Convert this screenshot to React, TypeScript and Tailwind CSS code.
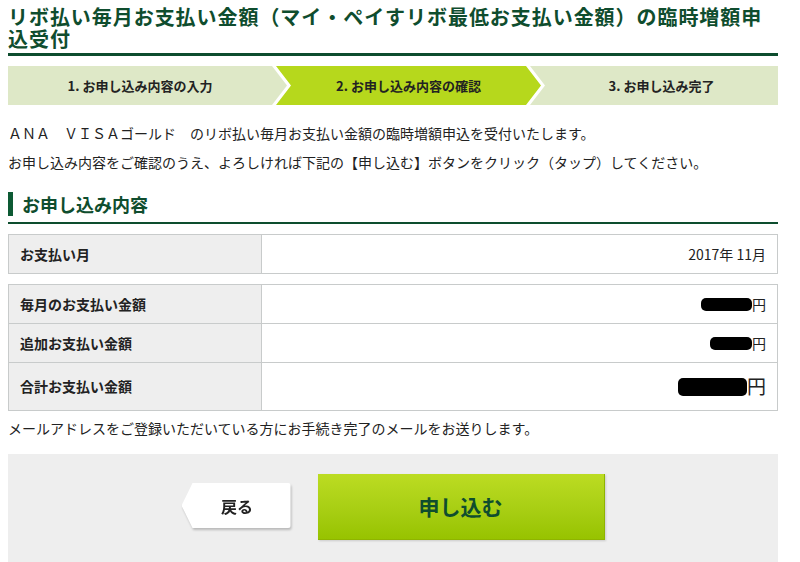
import React from "react";

const font = { fontFamily: '"Noto Sans CJK JP", "Noto Sans", sans-serif' };

function Blob({ w, h }: { w: number; h: number }) {
  return (
    <span
      className="inline-block bg-black rounded-[5px]"
      style={{ width: w, height: h }}
    />
  );
}

export default function App() {
  return (
    <div className="w-[800px] h-[562px] overflow-hidden bg-white text-[#222]" style={font}>
      <div className="mx-[8px] w-[770px]">
        <div className="pt-[6px] pb-[3px] border-b-[3px] border-[#0d4d2e]">
          <h1 className="w-[765px] text-[20px] leading-[22px] font-bold text-[#0f4d2e] tracking-[0.95px]">
            リボ払い毎月お支払い金額（マイ・ペイすリボ最低お支払い金額）の臨時増額申込受付
          </h1>
        </div>

        <div className="mt-[10px] flex h-[39px] text-[13px] font-bold text-[#222]">
          <div className="w-[279px] shrink-0 bg-[#dee8c7] [clip-path:polygon(0_0,calc(100%-15px)_0,100%_50%,calc(100%-15px)_100%,0_100%)] flex items-center justify-center pr-[15px]">
            1. お申し込み内容の入力
          </div>
          <div className="ml-[-11px] w-[265px] shrink-0 bg-[#b6d81c] [clip-path:polygon(0_0,calc(100%-15px)_0,100%_50%,calc(100%-15px)_100%,0_100%,15px_50%)] flex items-center justify-center pl-[15px] pr-[15px]">
            2. お申し込み内容の確認
          </div>
          <div className="ml-[-11px] flex-1 bg-[#dee8c7] [clip-path:polygon(0_0,100%_0,100%_100%,0_100%,15px_50%)] flex items-center justify-center pl-[15px]">
            3. お申し込み完了
          </div>
        </div>

        <div className="mt-[14px] text-[14px] leading-[29px]">
          <p>ＡＮＡ　ＶＩＳＡゴールド　のリボ払い毎月お支払い金額の臨時増額申込を受付いたします。</p>
          <p>お申し込み内容をご確認のうえ、よろしければ下記の【申し込む】ボタンをクリック（タップ）してください。</p>
        </div>

        <div className="mt-[15px] border-b-2 border-[#0d4d2e] pb-[6px]">
          <div className="h-[24px] border-l-[5px] border-[#0d5a34] pl-[9px] flex items-center text-[18px] font-bold text-[#0f4d2e]">
            お申し込み内容
          </div>
        </div>

        <div className="mt-[10px] border border-[#c8cbcb] text-[14px]">
          <div className="grid grid-cols-[253px_1fr] h-[38px]">
            <div className="bg-[#eeeeee] border-r border-[#c8cbcb] flex items-center pl-[11px] font-bold">お支払い月</div>
            <div className="flex items-center justify-end pr-[11px]">2017年 11月</div>
          </div>
        </div>

        <div className="mt-[10px] border border-[#c8cbcb] text-[14px]">
          <div className="grid grid-cols-[253px_1fr] h-[38px]">
            <div className="bg-[#eeeeee] border-r border-[#c8cbcb] flex items-center pl-[11px] font-bold">毎月のお支払い金額</div>
            <div className="flex items-center justify-end pr-[11px]">
              <Blob w={51} h={13} />
              <span>円</span>
            </div>
          </div>
          <div className="grid grid-cols-[253px_1fr] h-[39px] border-t border-[#c8cbcb]">
            <div className="bg-[#eeeeee] border-r border-[#c8cbcb] flex items-center pl-[11px] font-bold">追加お支払い金額</div>
            <div className="flex items-center justify-end pr-[11px]">
              <Blob w={42} h={13} />
              <span>円</span>
            </div>
          </div>
          <div className="grid grid-cols-[253px_1fr] h-[48px] border-t border-[#c8cbcb]">
            <div className="bg-[#eeeeee] border-r border-[#c8cbcb] flex items-center pl-[11px] font-bold">合計お支払い金額</div>
            <div className="flex items-center justify-end pr-[11px]">
              <Blob w={69} h={18} />
              <span className="text-[19px]">円</span>
            </div>
          </div>
        </div>

        <p className="mt-[7px] text-[14px] leading-[20px]">
          メールアドレスをご登録いただいている方にお手続き完了のメールをお送りします。
        </p>

        <div className="mt-[16px] h-[130px] bg-[#eeeeee] flex justify-center items-start pt-[20px] gap-[27px]">
          <div className="mt-[9px] [filter:drop-shadow(1px_2px_1px_rgba(0,0,0,0.22))]">
            <div className="w-[109px] h-[45px] bg-white rounded-r-[3px] [clip-path:polygon(11px_0,100%_0,100%_100%,11px_100%,0_50%)] flex items-center justify-center pl-[2px] text-[16px] font-bold text-[#222]">
              戻る
            </div>
          </div>
          <div className="w-[287px] h-[66px] bg-gradient-to-b from-[#bcdc22] to-[#97c300] border-r border-b border-[#8fb400] shadow-[1px_1px_2px_rgba(0,0,0,0.15)] flex items-center justify-center text-[21px] font-bold text-[#0f4d2e]">
            申し込む
          </div>
        </div>
      </div>
    </div>
  );
}
